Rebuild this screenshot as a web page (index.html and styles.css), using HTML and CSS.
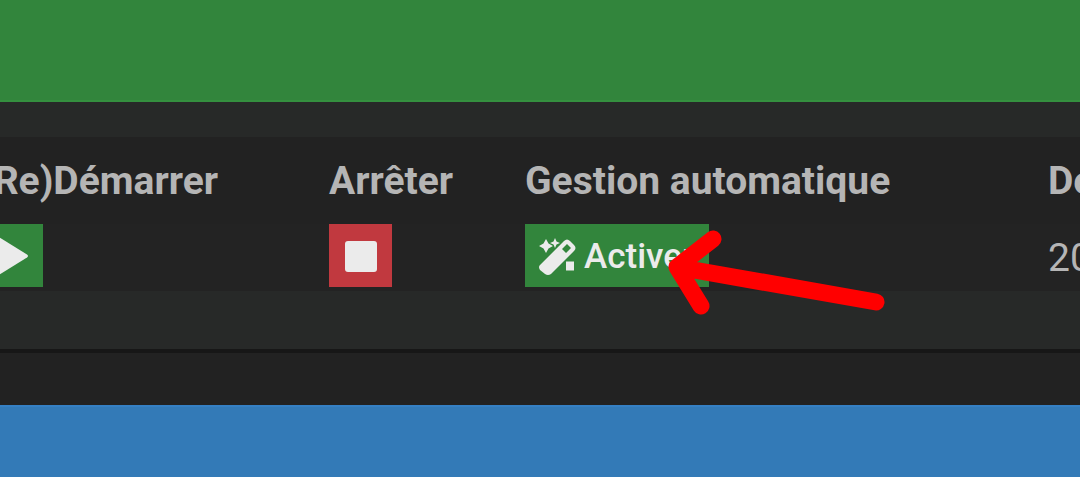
FILE: index.html
```html
<!DOCTYPE html>
<html lang="fr">
<head>
<meta charset="utf-8">
<title>Gestion automatique</title>
<link rel="stylesheet" href="styles.css">
</head>
<body>
<header class="bar bar-success"></header>
<main class="panel">
  <table class="daemon">
    <colgroup><col class="col-start"><col class="col-stop"><col class="col-auto"><col></colgroup>
    <thead>
      <tr><th>(Re)Démarrer</th><th>Arrêter</th><th>Gestion automatique</th><th>De</th></tr>
    </thead>
    <tbody>
      <tr>
        <td><button class="btn btn-success btn-icon" type="button" aria-label="(Re)Démarrer"><svg class="icon" viewBox="0 0 34 40"><path d="M2 2.500Q2 0 4.500 1.500L32 18.500Q34 20 32 21.500L4.500 38.500Q2 40 2 37.500Z"/></svg></button></td>
        <td><button class="btn btn-danger btn-icon" type="button" aria-label="Arrêter"><svg class="icon" viewBox="0 0 34 40"><rect x="1" y="5" width="32" height="31" rx="3"/></svg></button></td>
        <td class="auto-cell"><button class="btn btn-success" type="button"><svg class="icon-wand" viewBox="0 0 36 36"><path d="M6 0L8.500 4.500L13 7L8.500 9.500L6 14L3.500 9.500L-1 7L3.500 4.500ZM15 -1L16.500 2.500L20 4L16.500 5.500L15 9L13.500 5.500L10 4L13.500 2.500ZM26 22.500H34V31.500H26Z"/><path fill-rule="evenodd" d="M0 26L24 2Q27 -1 30 2L34 6Q37 9 34 12L11 35Q8 37 5 35L0 31Q-2 28 0 26ZM22 10L26 14L31 9L27 5Z"/></svg>Activer</button><svg class="arrow" viewBox="0 0 220 90" aria-hidden="true"><path d="M208 72L9 37L45 9M9 37L33 76"/></svg></td>
        <td class="date">20</td>
      </tr>
    </tbody>
  </table>
</main>
<footer class="bar bar-primary"></footer>
</body>
</html>
```
FILE: styles.css
```css
* { box-sizing: border-box; }
html, body { height: 100%; }
body {
  margin: 0;
  display: flex;
  flex-direction: column;
  overflow: hidden;
  background: #222222;
  color: #b5b5b5;
  font-family: Roboto, "Liberation Sans", sans-serif;
  font-size: 39px;
  line-height: 44px;
}
.bar-success { height: 102px; background: #32853c; border-bottom: 2px solid #34903f; }
.bar-primary { flex: 1; margin-top: 52px; background: #337ab7; border-top: 2px solid #3580c4; }
.panel {
  padding: 35px 0 58px;
  background: #272928;
  border-bottom: 4px solid #171717;
}
.daemon {
  width: calc(100% + 20px);
  margin-left: -20px;
  table-layout: fixed;
  border-collapse: collapse;
  background: #222222;
}
.col-start { width: 349px; }
.col-stop { width: 196px; }
.col-auto { width: 523px; }
th, td { padding: 0; text-align: left; white-space: nowrap; }
th { height: 87px; font-weight: 700; }
td { height: 67px; padding-bottom: 4px; background: #232323; }
.date { padding-bottom: 0; }
.btn {
  display: inline-flex;
  align-items: center;
  gap: 8px;
  height: 63px;
  padding: 2px 15px 0;
  border: 0;
  background: none;
  color: #ebebeb;
  font: inherit;
  font-size: 35px;
  font-weight: 500;
  vertical-align: top;
}
.btn-icon { width: 63px; justify-content: center; padding: 0; }
.btn-success { background: #32853c; }
.btn-danger { background: #c1393f; }
.icon { width: 34px; height: 40px; fill: currentColor; }
.icon-wand { width: 36px; height: 36px; fill: currentColor; overflow: visible; }
.auto-cell { position: relative; }
.arrow {
  position: absolute;
  left: 143px;
  top: 6px;
  width: 220px;
  height: 90px;
  fill: none;
  stroke: #ff0000;
  stroke-width: 17px;
  stroke-linecap: round;
  stroke-linejoin: round;
}
```
